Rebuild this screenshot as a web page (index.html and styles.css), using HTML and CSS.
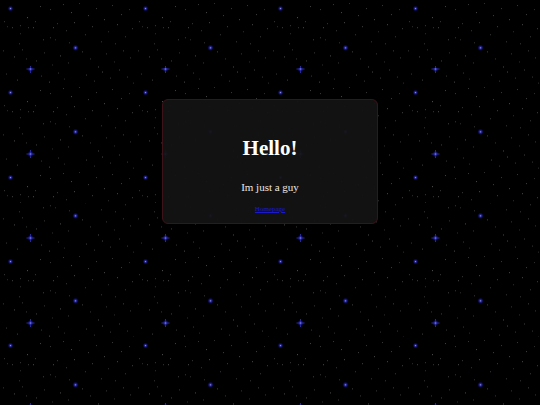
FILE: index.html
```html
<!DOCTYPE html>
<html lang="en">
<head>
<meta charset="utf-8">
<title>Hello</title>
<link rel="stylesheet" href="styles.css">
</head>
<body>
<main class="page">
  <section class="card">
    <h1 class="title">Hello!</h1>
    <p class="tagline">Im just a guy</p>
    <div class="links"><a class="home-link" href="#">Homepage</a></div>
  </section>
</main>
</body>
</html>
```

FILE: styles.css
```css
html, body {
  margin: 0;
  padding: 0;
}

body {
  min-height: 405px;
  background-color: #000;
  background-image: url("data:image/svg+xml;utf8,<svg xmlns='http://www.w3.org/2000/svg' width='135' height='84.375' viewBox='0 0 135 84.375'><defs><radialGradient id='g'><stop offset='0' stop-color='%238c8cf0'/><stop offset='0.35' stop-color='%233434c4' stop-opacity='0.75'/><stop offset='1' stop-color='%230000a0' stop-opacity='0'/></radialGradient></defs><g fill='%23ffffff' opacity='0.7'><rect x='4' y='21' width='1' height='1' opacity='0.3'/><rect x='7' y='26' width='1' height='1' opacity='0.25'/><rect x='12' y='27' width='1' height='1' opacity='0.35'/><rect x='20' y='25' width='1' height='1' opacity='0.3'/><rect x='27' y='17' width='1' height='1' opacity='0.45'/><rect x='28' y='27' width='1' height='1' opacity='0.3'/><rect x='33' y='27' width='1' height='1' opacity='0.4'/><rect x='35' y='21' width='1' height='1' opacity='0.3'/><rect x='40' y='6' width='1' height='1' opacity='0.35'/><rect x='50' y='9' width='1' height='1' opacity='0.3'/><rect x='50' y='37' width='1' height='1' opacity='0.3'/><rect x='53' y='27' width='1' height='1' opacity='0.4'/><rect x='57' y='23' width='1' height='1' opacity='0.3'/><rect x='20' y='33' width='1' height='1' opacity='0.25'/><rect x='43' y='39' width='1' height='1' opacity='0.35'/><rect x='55' y='39' width='1' height='1' opacity='0.25'/><rect x='19' y='43' width='1' height='1' opacity='0.3'/><rect x='63' y='4' width='1' height='1' opacity='0.3'/><rect x='71' y='12' width='1' height='1' opacity='0.4'/><rect x='79' y='3' width='1' height='1' opacity='0.25'/><rect x='88' y='15' width='1' height='1' opacity='0.35'/><rect x='96' y='8' width='1' height='1' opacity='0.3'/><rect x='104' y='19' width='1' height='1' opacity='0.4'/><rect x='112' y='5' width='1' height='1' opacity='0.3'/><rect x='121' y='14' width='1' height='1' opacity='0.35'/><rect x='129' y='9' width='1' height='1' opacity='0.25'/><rect x='66' y='30' width='1' height='1' opacity='0.3'/><rect x='74' y='22' width='1' height='1' opacity='0.4'/><rect x='85' y='34' width='1' height='1' opacity='0.3'/><rect x='92' y='26' width='1' height='1' opacity='0.35'/><rect x='101' y='41' width='1' height='1' opacity='0.3'/><rect x='108' y='31' width='1' height='1' opacity='0.25'/><rect x='117' y='24' width='1' height='1' opacity='0.4'/><rect x='125' y='36' width='1' height='1' opacity='0.3'/><rect x='132' y='28' width='1' height='1' opacity='0.35'/><rect x='69' y='42' width='1' height='1' opacity='0.3'/><rect x='115' y='43' width='1' height='1' opacity='0.3'/><rect x='3' y='50' width='1' height='1' opacity='0.3'/><rect x='14' y='56' width='1' height='1' opacity='0.4'/><rect x='22' y='49' width='1' height='1' opacity='0.3'/><rect x='36' y='60' width='1' height='1' opacity='0.35'/><rect x='44' y='52' width='1' height='1' opacity='0.3'/><rect x='52' y='64' width='1' height='1' opacity='0.25'/><rect x='60' y='55' width='1' height='1' opacity='0.4'/><rect x='68' y='62' width='1' height='1' opacity='0.3'/><rect x='82' y='51' width='1' height='1' opacity='0.35'/><rect x='90' y='58' width='1' height='1' opacity='0.3'/><rect x='98' y='66' width='1' height='1' opacity='0.4'/><rect x='106' y='53' width='1' height='1' opacity='0.3'/><rect x='114' y='61' width='1' height='1' opacity='0.25'/><rect x='123' y='50' width='1' height='1' opacity='0.35'/><rect x='130' y='57' width='1' height='1' opacity='0.3'/><rect x='6' y='74' width='1' height='1' opacity='0.3'/><rect x='17' y='80' width='1' height='1' opacity='0.35'/><rect x='41' y='76' width='1' height='1' opacity='0.3'/><rect x='49' y='82' width='1' height='1' opacity='0.4'/><rect x='58' y='73' width='1' height='1' opacity='0.3'/><rect x='64' y='79' width='1' height='1' opacity='0.25'/><rect x='86' y='75' width='1' height='1' opacity='0.35'/><rect x='94' y='81' width='1' height='1' opacity='0.3'/><rect x='102' y='72' width='1' height='1' opacity='0.4'/><rect x='110' y='78' width='1' height='1' opacity='0.3'/><rect x='119' y='70' width='1' height='1' opacity='0.35'/><rect x='127' y='77' width='1' height='1' opacity='0.3'/><rect x='133' y='83' width='1' height='1' opacity='0.25'/><rect x='26' y='58' width='1' height='1' opacity='0.3'/></g><circle cx='10.5' cy='8.5' r='3' fill='url(%23g)'/><circle cx='75.5' cy='47.5' r='3.3' fill='url(%23g)'/><g fill='%233c3cd0' opacity='0.7'><rect x='26.5' y='69' width='8' height='1'/><rect x='30' y='65.5' width='1' height='8'/></g><circle cx='30.5' cy='69.5' r='3.4' fill='url(%23g)'/></svg>");
  background-size: 135px 84.375px;
  background-repeat: repeat;
  font-family: "Liberation Serif", "Times New Roman", serif;
}

.page {
  display: flex;
  justify-content: center;
  padding-top: 99px;
}

.card {
  box-sizing: border-box;
  width: 216px;
  height: 125px;
  padding: 36px 10px 0;
  background: rgba(19, 19, 19, 0.94);
  border: 1px solid #3e1219;
  border-radius: 6px;
  text-align: center;
  color: #f2f2f2;
}

.title {
  margin: 0;
  font-size: 21px;
  line-height: 24px;
  font-weight: bold;
  color: #ffffff;
}

.tagline {
  margin: 21px 0 0;
  font-size: 11px;
  line-height: 13px;
  color: #e8e8e8;
}

.links {
  margin-top: 11px;
  font-size: 7px;
  line-height: 8px;
}

.home-link {
  color: #1a1acc;
  text-decoration: underline;
}
```
